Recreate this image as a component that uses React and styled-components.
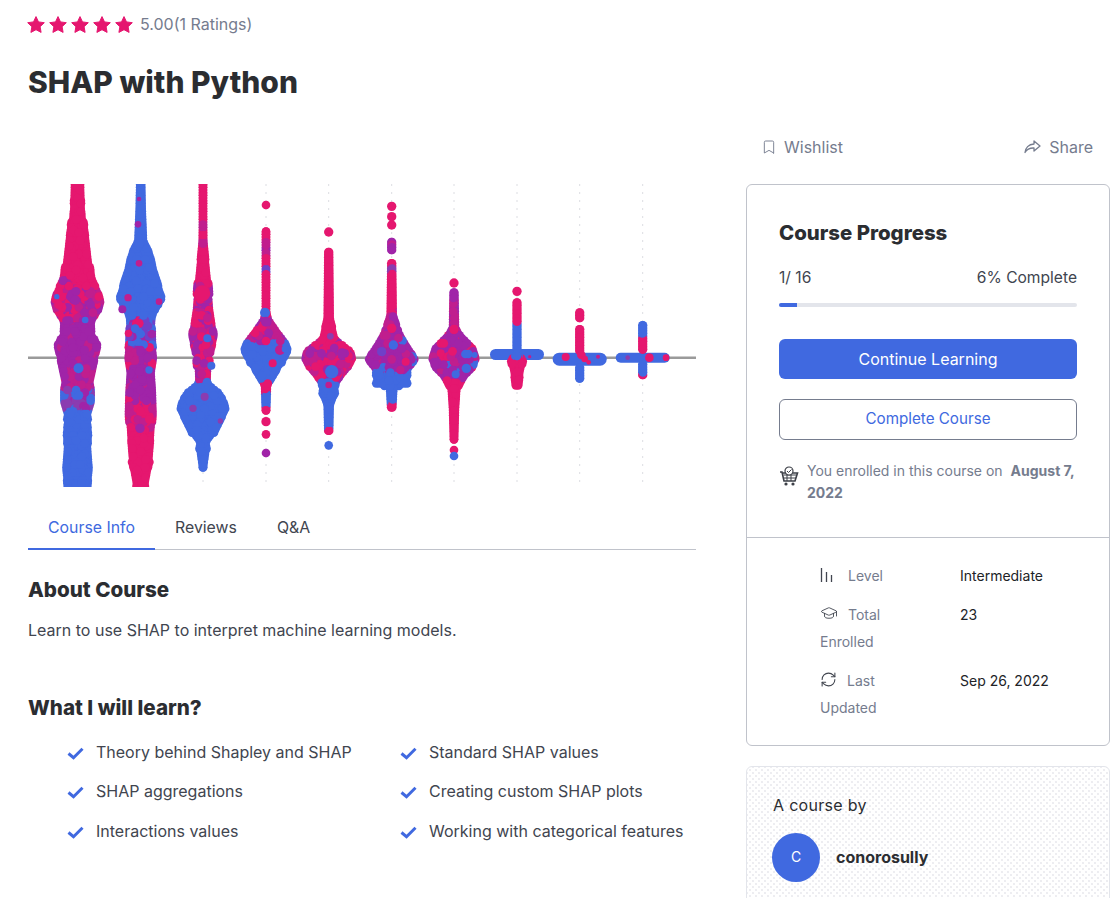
import * as React from 'react';
import styled, { createGlobalStyle } from 'styled-components';
import { Bookmark, GraduationCap, RefreshCw } from 'lucide-react';

const PINK = '#e5176f';
const BLUE = '#4069e0';
const PURPLE = '#a024a8';

const GlobalStyle = createGlobalStyle`
  html, body {
    margin: 0;
    height: 898px;
    overflow: hidden;
    background: #fff;
    font-family: Inter, "Liberation Sans", sans-serif;
  }
  * { box-sizing: border-box; }
`;

const Page = styled.div`
  display: flex;
  width: 1120px;
  height: 898px;
  overflow: hidden;
`;

const Main = styled.div`
  width: 668px;
  margin-left: 28px;
  padding-top: 14px;
`;

const Sidebar = styled.aside`
  width: 364px;
  margin-left: 50px;
  padding-top: 137px;
  flex-shrink: 0;
`;

const Rating = styled.div`
  display: flex;
  align-items: center;
  height: 20px;
`;

const Stars = styled.div`
  display: flex;
  gap: 4px;
  margin: 0 7px 0 -1px;
`;

const RatingText = styled.span`
  font-size: 16px;
  color: #757c8e;
`;

const Title = styled.h1`
  margin: 30px 0 0;
  height: 36px;
  font-size: 30px;
  line-height: 36px;
  font-weight: 800;
  color: #2b2d31;
`;

const Plot = styled.svg`
  display: block;
  margin-top: 84px;
`;

const Tabs = styled.div`
  display: flex;
  height: 63px;
  padding-top: 19px;
  border-bottom: 1px solid #c0c3cb;
`;

const Tab = styled.div`
  height: 44px;
  padding: 13px 20px 0;
  font-size: 15.85px;
  line-height: 18px;
  color: ${props => (props.$active ? BLUE : '#41454f')};
  border-bottom: ${props => (props.$active ? `2px solid ${BLUE}` : 'none')};
`;

const SectionTitle = styled.h2`
  margin: ${props => props.$top}px 0 0;
  font-size: 20.6px;
  line-height: 26px;
  font-weight: 800;
  color: #2b2d31;
`;

const Paragraph = styled.p`
  margin: 17px 0 0;
  font-size: 16px;
  line-height: 20px;
  color: #41454f;
`;

const LearnList = styled.ul`
  display: grid;
  grid-template-columns: 333px 1fr;
  row-gap: 19.5px;
  list-style: none;
  margin: 20.6px 0 0;
  padding: 0 0 0 39px;
`;

const LearnItem = styled.li`
  display: flex;
  align-items: center;
  height: 20px;
  font-size: 16px;
  white-space: nowrap;
  color: #41454f;

  svg {
    margin-right: 12px;
    margin-top: 3px;
    flex-shrink: 0;
  }
`;

const Actions = styled.div`
  display: flex;
  justify-content: space-between;
  height: 20px;
  margin-bottom: 27px;
  padding: 0 17px 0 15px;
`;

const Action = styled.div`
  display: flex;
  align-items: center;
  gap: ${props => props.$gap}px;
  font-size: 16px;
  color: #757c8e;
`;

const Card = styled.section`
  border: 1px solid #c0c3cb;
  border-radius: 6px;
  height: 562px;
`;

const ProgressPane = styled.div`
  height: 353px;
  padding: 35px 32px 0;
  border-bottom: 1px solid #c0c3cb;
`;

const CardTitle = styled.h3`
  margin: 0;
  font-size: 20.4px;
  line-height: 26px;
  font-weight: 800;
  color: #2b2d31;
`;

const ProgressLabels = styled.div`
  display: flex;
  justify-content: space-between;
  margin-top: 22px;
  font-size: 15.6px;
  line-height: 20px;
  color: #41454f;
`;

const ProgressTrack = styled.div`
  height: 4px;
  margin-top: 15px;
  background: #e3e5eb;
  border-radius: 2px;
  overflow: hidden;
`;

const ProgressFill = styled.div`
  height: 100%;
  background: ${BLUE};
`;

const Button = styled.div`
  display: flex;
  align-items: center;
  justify-content: center;
  height: ${props => (props.$outline ? 41 : 40)}px;
  margin-top: ${props => (props.$outline ? 20 : 32)}px;
  padding-bottom: ${props => (props.$outline ? 2 : 0)}px;
  border-radius: 6px;
  font-size: ${props => (props.$outline ? 15.2 : 16)}px;
  color: ${props => (props.$outline ? BLUE : '#fff')};
  background: ${props => (props.$outline ? '#fff' : BLUE)};
  border: ${props => (props.$outline ? '1px solid #757c8e' : 'none')};
`;

const Enrolled = styled.div`
  display: flex;
  margin-top: 20px;
  font-size: 14px;
  line-height: 22px;
  color: #757c8e;

  svg {
    flex-shrink: 0;
    margin: 6px 8px 0 0;
  }

  strong {
    font-weight: 700;
  }

  strong:first-of-type {
    margin-left: 4px;
  }
`;

const Details = styled.div`
  padding: 24px 0 0 73px;
`;

const DetailRow = styled.div`
  display: grid;
  grid-template-columns: 140px 1fr;
  margin-bottom: ${props => props.$gap}px;
`;

const DetailLabel = styled.div`
  padding-right: 46px;
  font-size: 14px;
  line-height: 27px;
  color: #757c8e;

  svg {
    vertical-align: -2px;
    margin-right: 10px;
    color: #41454f;
  }
`;

const DetailValue = styled.div`
  font-size: 14px;
  line-height: 27px;
  color: #212327;
`;

const AuthorCard = styled.section`
  height: 180px;
  margin-top: 20px;
  padding: 28px 26px 28px 25px;
  border: 1px solid #e3e5eb;
  border-radius: 6px;
  background-color: #fff;
  background-image: radial-gradient(#ececf0 0.7px, transparent 0.8px),
    radial-gradient(#ececf0 0.7px, transparent 0.8px);
  background-size: 6px 6px;
  background-position: 0 0, 3px 3px;
`;

const AuthorLabel = styled.div`
  padding-left: 1px;
  font-size: 16px;
  line-height: 20px;
  letter-spacing: 0.3px;
  color: #2b2d31;
`;

const AuthorRow = styled.div`
  display: flex;
  align-items: center;
  gap: 16px;
  margin-top: 18px;
`;

const Avatar = styled.div`
  display: flex;
  align-items: center;
  justify-content: center;
  width: 48px;
  height: 49px;
  padding-bottom: 2px;
  border-radius: 50%;
  background: ${BLUE};
  color: #fff;
  font-size: 14px;
`;

const AuthorName = styled.div`
  padding-bottom: 2px;
  font-size: 16px;
  font-weight: 700;
  color: #2b2d31;
`;

// swarm numbers are in 3x units, read off the enlarged crops: y counts from 27, half widths and offsets from the column centre
const columns = [
  {
    cx: 77.5,
    outlines: [[[0, 20], [100, 22], [130, 26], [150, 30], [190, 36], [260, 44], [320, 55], [345, 70], [380, 80], [410, 72], [440, 50], [480, 52], [510, 72], [540, 65], [590, 55], [620, 48], [650, 52], [680, 52], [720, 40], [760, 46], [790, 40], [830, 42], [880, 46], [960, 38]]],
    bands: [[0, 315, { P: 1 }], [315, 430, { P: 0.5, V: 0.3, pv: 0.2 }], [430, 580, { V: 0.9, pv: 0.1 }], [580, 640, { pv: 0.6, V: 0.3, P: 0.1 }], [640, 705, { bp: 0.5, B: 0.4, V: 0.1 }], [705, 960, { B: 1 }]],
    marks: [[-7, 375, 15, 'V'], [23, 435, 10, 'B'], [-62, 365, 8, 'B'], [3, 580, 15, 'B']],
  },
  {
    cx: 140.7,
    outlines: [[[0, 14], [100, 16], [200, 20], [240, 40], [290, 50], [320, 60], [370, 78], [400, 55], [440, 44], [500, 45], [540, 50], [590, 42], [650, 46], [720, 48], [800, 42], [870, 36], [960, 20]]],
    bands: [[0, 430, { B: 1 }], [430, 520, { bv: 0.5, B: 0.3, P: 0.1, V: 0.1 }], [520, 680, { V: 0.75, pv: 0.2, P: 0.05 }], [680, 760, { P: 0.6, pv: 0.4 }], [760, 960, { P: 1 }]],
    marks: [[-5, 72, 7, 'V'], [-8, 148, 10, 'V'], [-5, 265, 10, 'pv'], [-38, 368, 11, 'pv'], [55, 380, 10, 'pv'], [-55, 403, 12, 'V'], [-37, 475, 11, 'P'], [-2, 760, 14, 'V'], [25, 585, 11, 'B']],
  },
  {
    cx: 203,
    outlines: [[[0, 13], [100, 12], [200, 14], [280, 22], [340, 28], [400, 32], [480, 44], [530, 32], [580, 28], [630, 26], [665, 70], [700, 80], [740, 60], [770, 45], [800, 24], [870, 14], [895, 13]]],
    bands: [[0, 140, { P: 1 }], [140, 165, { pv: 1 }], [165, 190, { P: 1 }], [190, 208, { pv: 1 }], [208, 330, { P: 1 }], [330, 620, { P: 0.4, V: 0.4, pv: 0.2 }], [620, 900, { B: 1 }]],
    marks: [[-2, 355, 24, 'P'], [13, 490, 12, 'B'], [25, 572, 12, 'B'], [-30, 700, 11, 'bp'], [5, 665, 12, 'bp'], [52, 738, 8, 'bp'], [-8, 720, 12, 'B']],
  },
  {
    cx: 266,
    outlines: [[[157, 13], [410, 13], [430, 18], [470, 45], [505, 72], [525, 80], [545, 70], [590, 40], [630, 16], [725, 13]]],
    bands: [[157, 195, { P: 1 }], [195, 250, { pv: 0.7, V: 0.3 }], [250, 275, { P: 1 }], [275, 298, { bv: 1 }], [298, 430, { P: 1 }], [430, 505, { V: 0.5, P: 0.2, pv: 0.3 }], [505, 625, { B: 1 }], [625, 655, { P: 1 }], [655, 695, { B: 1 }], [695, 730, { P: 1 }]],
    marks: [[0, 90, 13, 'P'], [-3, 413, 15, 'B'], [0, 740, 14, 'P'], [0, 778, 13, 'P'], [0, 834, 13, 'V'], [0, 440, 15, 'V'], [42, 525, 15, 'pv'], [58, 522, 11, 'B'], [20, 565, 12, 'P']],
  },
  {
    cx: 328.7,
    outlines: [[[218, 14], [430, 16], [490, 30], [515, 55], [530, 75], [550, 80], [580, 65], [620, 35], [650, 30], [690, 16], [782, 14]]],
    bands: [[218, 500, { P: 1 }], [500, 620, { P: 0.55, V: 0.3, pv: 0.15 }], [620, 762, { B: 1 }], [762, 790, { P: 1 }]],
    marks: [[0, 171, 14, 'P'], [0, 811, 13, 'B'], [9, 590, 20, 'B'], [5, 484, 10, 'bp'], [0, 630, 10, 'pv'], [40, 535, 15, 'V']],
  },
  {
    cx: 391.7,
    outlines: [[[252, 14], [420, 16], [460, 28], [500, 50], [540, 75], [555, 80], [585, 55], [590, 58], [625, 58], [638, 18], [710, 14]], [[188, 14], [242, 14]]],
    bands: [[188, 242, { V: 0.7, pv: 0.3 }], [252, 278, { P: 1 }], [278, 295, { bp: 1 }], [295, 420, { P: 0.9, pv: 0.1 }], [420, 590, { V: 0.65, pv: 0.25, B: 0.1 }], [590, 685, { B: 1 }], [685, 715, { P: 1 }]],
    marks: [[0, 94, 14, 'P'], [0, 125, 14, 'P'], [0, 150, 14, 'P'], [0, 460, 14, 'P'], [5, 510, 14, 'B'], [-30, 530, 14, 'bv'], [42, 560, 12, 'P']],
  },
  {
    cx: 454,
    outlines: [[[340, 14], [460, 16], [490, 40], [520, 70], [550, 80], [580, 65], [610, 35], [640, 20], [700, 16], [808, 13]]],
    bands: [[340, 372, { V: 1 }], [372, 470, { pv: 0.5, V: 0.5 }], [470, 615, { V: 0.6, pv: 0.2, P: 0.15, B: 0.05 }], [615, 810, { P: 1 }]],
    marks: [[0, 324, 14, 'P'], [0, 825, 13, 'P'], [0, 843, 13, 'B'], [0, 463, 14, 'P'], [-40, 535, 12, 'P'], [37, 580, 14, 'B'], [5, 598, 12, 'B'], [62, 540, 9, 'B']],
  },
  {
    cx: 517,
    bars: [[522, 555, 81]],
    outlines: [[[370, 14], [540, 14], [552, 30], [590, 22], [650, 14]]],
    bands: [[370, 440, { P: 1 }], [440, 545, { B: 1 }], [545, 650, { P: 1 }]],
    marks: [[0, 349, 14, 'P'], [38, 545, 5, 'pv']],
  },
  {
    cx: 579.7,
    bars: [[533, 572, 81]],
    outlines: [[[400, 14], [447, 14]], [[450, 14], [540, 14]], [[565, 14], [628, 14]]],
    bands: [[400, 545, { P: 1 }], [545, 630, { B: 1 }]],
    marks: [[-42, 546, 12, 'P'], [5, 540, 13, 'P'], [15, 552, 10, 'P'], [27, 562, 7, 'P'], [55, 545, 6, 'pv']],
  },
  {
    cx: 642.7,
    bars: [[533, 563, 81]],
    outlines: [[[438, 14], [540, 14]], [[555, 14], [620, 14]]],
    bands: [[438, 485, { B: 1 }], [485, 545, { P: 1 }], [545, 600, { B: 1 }], [600, 622, { P: 1 }]],
    marks: [[70, 548, 10, 'P'], [20, 548, 13, 'P'], [-45, 548, 7, 'bp']],
  },
];

const toY = y => (y - 27) / 3;

const DOT = 13;

const makeRandom = seed => () => {
  seed = (seed + 0x6d2b79f5) | 0;
  let t = Math.imul(seed ^ (seed >>> 15), 1 | seed);
  t = (t + Math.imul(t ^ (t >>> 7), 61 | t)) ^ t;
  return ((t ^ (t >>> 14)) >>> 0) / 4294967296;
};

const pick = (weights, roll) => {
  const keys = Object.keys(weights);
  for (const key of keys) {
    roll -= weights[key];
    if (roll <= 0) return key;
  }
  return keys[keys.length - 1];
};

const widthAt = (outline, y) => {
  for (let i = 1; i < outline.length; i++) {
    const [y0, w0] = outline[i - 1];
    const [y1, w1] = outline[i];
    if (y <= y1) return y1 === y0 ? Math.max(w0, w1) : w0 + (w1 - w0) * (y - y0) / (y1 - y0);
  }
  return outline[outline.length - 1][1];
};

// fills each outline with overlapping dots, colours come in blotches so the mixes look like the real swarm
const buildDots = (column, seed) => {
  const random = makeRandom(seed);
  const dots = [];

  column.outlines.forEach(outline => {
    const top = outline[0][0] + DOT;
    const bottom = outline[outline.length - 1][0] - DOT;
    let bump = 0;

    for (let y = top; y <= Math.max(bottom, top); y += 8) {
      if (random() < 0.3) bump = random() * 6 - 3;
      const width = widthAt(outline, y);
      const half = Math.max(0, width - DOT + (width > 20 ? bump : 0)) / 3;
      const count = Math.max(1, Math.ceil(half * 2 / 3));
      const band = column.bands.find(([y0, y1]) => y >= y0 && y < y1) || column.bands[column.bands.length - 1];

      for (let i = 0; i <= count; i++) {
        const dx = half === 0 ? 0 : -half + (2 * half * i) / count;
        const cell = Math.floor((dx + 60) / 5) * 7919 + Math.floor(y / 18) * 104729 + seed;
        const cellRandom = makeRandom(Math.imul(cell, 2654435761));
        cellRandom();
        const roll = random() < 0.78 ? cellRandom() : random();
        dots.push({ x: dx, y, fill: pick(band[2], roll), order: random() });
      }
    }
  });

  return dots.sort((a, b) => a.order - b.order);
};

const paint = {
  P: PINK,
  B: BLUE,
  V: PURPLE,
  pv: '#c01e8e',
  bp: '#8b3cb0',
  bv: '#7040c8',
};

const SwarmColumn = ({ column, seed }) => (
  <g>
    { (column.bars || []).map(([y0, y1, half], i) => (
      <rect key={ i } x={ column.cx - half / 3 } y={ toY(y0) } width={ half * 2 / 3 } height={ (y1 - y0) / 3 } rx={ (y1 - y0) / 6 } fill={ BLUE }/>
    )) }
    { buildDots(column, seed).map((dot, i) => (
      <circle key={ i } cx={ column.cx + dot.x } cy={ toY(dot.y) } r={ DOT / 3 } fill={ paint[dot.fill] }/>
    )) }
    { column.marks.map(([dx, y, r, fill], i) => (
      <circle key={ i } cx={ column.cx + dx / 3 } cy={ toY(y) } r={ r / 3 } fill={ paint[fill] }/>
    )) }
  </g>
);

const SwarmPlot = () => (
  <Plot width={ 668 } height={ 303 } viewBox={ '28 0 668 303' }>
    { columns.map(column => (
      <line key={ column.cx } x1={ column.cx } x2={ column.cx } y1={ 0 } y2={ 303 } stroke={ '#dcdde2' } strokeDasharray={ '2 6' }/>
    )) }
    <line x1={ 28 } x2={ 696 } y1={ 173.7 } y2={ 173.7 } stroke={ '#9a9a9a' } strokeWidth={ 2.5 }/>
    { columns.map((column, index) => <SwarmColumn key={ column.cx } column={ column } seed={ 17 + index * 29 }/>) }
  </Plot>
);

const Star = () => (
  <svg width={ 18 } height={ 17 } viewBox={ '0 0 18 17' }>
    <path d={ 'M9 .6l2.5 5.3 5.8.8-4.2 4 1 5.7L9 13.7l-5.1 2.7 1-5.7-4.2-4 5.8-.8z' } fill={ PINK } stroke={ PINK } strokeLinejoin={ 'round' }/>
  </svg>
);

const Check = () => (
  <svg width={ 17 } height={ 13 } viewBox={ '0 0 17 13' }>
    <path d={ 'M1.500 6.500l5 4.200L15.500 1.800' } fill={ 'none' } stroke={ BLUE } strokeWidth={ 3 }/>
  </svg>
);

const ShareArrow = () => (
  <svg width={ 17 } height={ 14 } viewBox={ '0 0 17 14' } fill={ 'none' } stroke={ '#757c8e' } strokeWidth={ 1.3 } strokeLinejoin={ 'round' }>
    <path d={ 'M10 1l6 5-6 5V8C6 7.800 3 9 1 12.500 1.400 8 4.500 4.300 10 4z' }/>
  </svg>
);

const Cart = () => (
  <svg width={ 20 } height={ 20 } viewBox={ '0 0 20 20' }>
    <path d={ 'M1 6h2l2 9h11l2.500-8H4' } fill={ 'none' } stroke={ '#3d4048' } strokeWidth={ 1.6 }/>
    <path d={ 'M4.500 9h13M5 12h12M8 7v8M12 7v8' } stroke={ '#3d4048' }/>
    <circle cx={ 10 } cy={ 5 } r={ 4 } fill={ '#fff' } stroke={ '#3d4048' } strokeWidth={ 1.2 }/>
    <path d={ 'M8 5l1.500 1.500L12.500 3.500' } fill={ 'none' } stroke={ '#3d4048' }/>
    <circle cx={ 7 } cy={ 18 } r={ 1.600 } fill={ '#3d4048' }/>
    <circle cx={ 14 } cy={ 18 } r={ 1.600 } fill={ '#3d4048' }/>
  </svg>
);

const LevelBars = styled.svg.attrs({ width: 14, height: 16, viewBox: '0 0 14 16', stroke: '#41454f', strokeWidth: 1.3 })`
  && { margin-right: 14px; }
`;

const learnItems = [
  'Theory behind Shapley and SHAP',
  'Standard SHAP values',
  'SHAP aggregations',
  'Creating custom SHAP plots',
  'Interactions values',
  'Working with categorical features',
];

export default function App() {
  return (
    <Page>
      <GlobalStyle/>
      <Main>
        <Rating>
          <Stars>{ [0, 1, 2, 3, 4].map(i => <Star key={ i }/>) }</Stars>
          <RatingText>5.00(1 Ratings)</RatingText>
        </Rating>
        <Title>SHAP with Python</Title>
        <SwarmPlot/>
        <Tabs>
          <Tab $active>Course Info</Tab>
          <Tab>Reviews</Tab>
          <Tab>Q&amp;A</Tab>
        </Tabs>
        <SectionTitle $top={ 27 }>About Course</SectionTitle>
        <Paragraph>Learn to use SHAP to interpret machine learning models.</Paragraph>
        <SectionTitle $top={ 55 }>What I will learn?</SectionTitle>
        <LearnList>
          { learnItems.map(item => <LearnItem key={ item }><Check/>{ item }</LearnItem>) }
        </LearnList>
      </Main>
      <Sidebar>
        <Actions>
          <Action $gap={ 7 }><Bookmark size={ 16 } strokeWidth={ 1.4 }/>Wishlist</Action>
          <Action $gap={ 8 }><ShareArrow/>Share</Action>
        </Actions>
        <Card>
          <ProgressPane>
            <CardTitle>Course Progress</CardTitle>
            <ProgressLabels><span>1/ 16</span><span>6% Complete</span></ProgressLabels>
            <ProgressTrack><ProgressFill style={ { width: '6%' } }/></ProgressTrack>
            <Button>Continue Learning</Button>
            <Button $outline>Complete Course</Button>
            <Enrolled>
              <Cart/>
              <div>You enrolled in this course on <strong>August 7,</strong> <strong>2022</strong></div>
            </Enrolled>
          </ProgressPane>
          <Details>
            <DetailRow $gap={ 12 }>
              <DetailLabel><LevelBars><path d={ 'M1.500 1v14M6.500 5v10M11.500 8v7' }/></LevelBars>Level</DetailLabel>
              <DetailValue>Intermediate</DetailValue>
            </DetailRow>
            <DetailRow $gap={ 12 }>
              <DetailLabel><GraduationCap size={ 18 } strokeWidth={ 1.2 }/>Total Enrolled</DetailLabel>
              <DetailValue>23</DetailValue>
            </DetailRow>
            <DetailRow $gap={ 0 }>
              <DetailLabel><RefreshCw size={ 17 } strokeWidth={ 1.5 }/>Last Updated</DetailLabel>
              <DetailValue>Sep 26, 2022</DetailValue>
            </DetailRow>
          </Details>
        </Card>
        <AuthorCard>
          <AuthorLabel>A course by</AuthorLabel>
          <AuthorRow>
            <Avatar>C</Avatar>
            <AuthorName>conorosully</AuthorName>
          </AuthorRow>
        </AuthorCard>
      </Sidebar>
    </Page>
  );
}
